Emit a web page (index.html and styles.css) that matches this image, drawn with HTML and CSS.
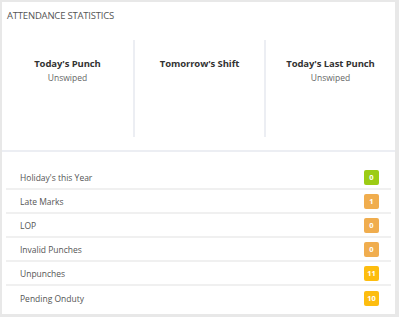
FILE: index.html
```html
<!DOCTYPE html>
<html lang="en">
<head>
  <meta charset="UTF-8">
  <title>Attendance Statistics</title>
  <link rel="stylesheet" href="styles.css">
</head>
<body>
  <div class="panel">
    <div class="panel-title">ATTENDANCE STATISTICS</div>

    <div class="punches">
      <div class="punch">
        <div class="punch-label">Today's Punch</div>
        <div class="punch-value">Unswiped</div>
      </div>
      <div class="punch">
        <div class="punch-label">Tomorrow's Shift</div>
        <div class="punch-value"></div>
      </div>
      <div class="punch">
        <div class="punch-label">Today's Last Punch</div>
        <div class="punch-value">Unswiped</div>
      </div>
    </div>

    <ul class="stats">
      <li><span>Holiday's this Year</span><span class="badge green">0</span></li>
      <li><span>Late Marks</span><span class="badge orange">1</span></li>
      <li><span>LOP</span><span class="badge orange">0</span></li>
      <li><span>Invalid Punches</span><span class="badge orange">0</span></li>
      <li><span>Unpunches</span><span class="badge yellow">11</span></li>
      <li><span>Pending Onduty</span><span class="badge yellow">10</span></li>
    </ul>
  </div>
</body>
</html>
```

FILE: styles.css
```css
body {
  margin: 0;
  padding: 2px 4px 3px 2px;
  background-color: #e8e8e8;
  font-family: 'Open Sans', 'Segoe UI', sans-serif;
  color: #444;
}

.panel {
  background-color: #fff;
  height: 312px;
  box-sizing: border-box;
}

.panel-title {
  padding: 7px 0 0 5px;
  height: 28px;
  box-sizing: border-box;
  font-size: 9.5px;
  color: #555;
  letter-spacing: -0.2px;
}

.punches {
  display: grid;
  grid-template-columns: 1fr 1fr 1fr;
  padding: 10px 0 13px;
  border-bottom: 2px solid #eceef3;
}

.punch {
  height: 97px;
  text-align: center;
  padding-top: 17px;
  box-sizing: border-box;
}

.punch + .punch {
  border-left: 2px solid #eceef3;
}

.punch-label {
  font-size: 9.5px;
  font-weight: bold;
  color: #333;
  letter-spacing: -0.1px;
}

.punch-value {
  font-size: 8.5px;
  color: #666;
  margin-top: 2px;
}

.stats {
  list-style: none;
  margin: 14px 4px 0 4px;
  padding: 0;
}

.stats li {
  display: flex;
  justify-content: space-between;
  align-items: center;
  height: 24px;
  box-sizing: border-box;
  padding: 0 12px 0 14px;
  font-size: 8.5px;
  color: #555;
  border-bottom: 2px solid #f0f0f0;
}

.stats li:last-child {
  border-bottom: none;
}

.badge {
  min-width: 15px;
  height: 15px;
  line-height: 15px;
  padding: 0 3px;
  box-sizing: border-box;
  text-align: center;
  border-radius: 2px;
  font-size: 7.5px;
  font-weight: bold;
  color: #fff;
}

.green { background-color: #9ccc14; }
.orange { background-color: #f0ad4e; }
.yellow { background-color: #fdbd0f; }
```
